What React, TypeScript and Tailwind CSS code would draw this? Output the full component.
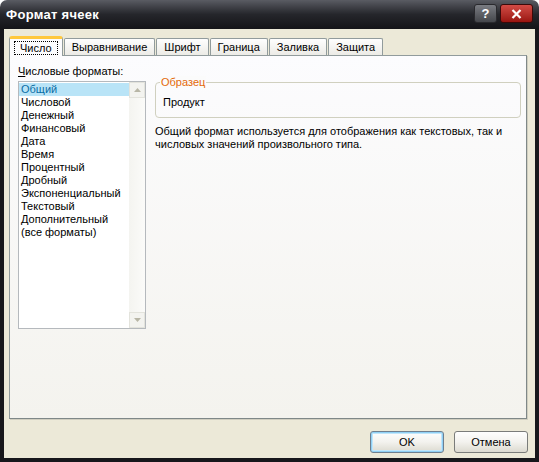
import React from "react";

const tabs = ["Число", "Выравнивание", "Шрифт", "Граница", "Заливка", "Защита"];

const formats = [
  "Общий",
  "Числовой",
  "Денежный",
  "Финансовый",
  "Дата",
  "Время",
  "Процентный",
  "Дробный",
  "Экспоненциальный",
  "Текстовый",
  "Дополнительный",
  "(все форматы)",
];

const font = { fontFamily: '"Liberation Sans", Arial, sans-serif' };

const TitleBar = () => (
  <div className="h-[29px] flex items-center justify-between pl-[6px] pr-[6px] bg-gradient-to-b from-[#5a5c63] via-[#25262b] to-[#141418] rounded-t-[7px]">
    <span className="text-white font-bold text-[13px] tracking-[0.3px]">Формат ячеек</span>
    <div className="flex gap-[3px] mt-[-2px]">
      <div className="w-[23px] h-[19px] rounded-[3px] border border-[#2a2a2e] bg-gradient-to-b from-[#7a7c82] to-[#45474c] flex items-center justify-center text-white font-bold text-[13px]">
        ?
      </div>
      <div className="w-[33px] h-[19px] rounded-[3px] border border-[#3b0a0a] bg-gradient-to-b from-[#d24b45] to-[#9a1410] flex items-center justify-center">
        <svg width="11" height="10" viewBox="0 0 11 10">
          <path d="M1.5 1 L9.5 9 M9.5 1 L1.5 9" stroke="white" strokeWidth="2.2" />
        </svg>
      </div>
    </div>
  </div>
);

const Tabs = () => (
  <div className="flex items-end h-[20px]">
    {tabs.map((t, i) =>
      i === 0 ? (
        <div
          key={t}
          className="relative z-10 h-[20px] px-[4px] flex items-center bg-[#fcfcfe] border border-[#919b9c] border-b-0 rounded-t-[3px] border-t-[3px] border-t-[#ffc83c] mr-[1px] mb-[-1px]"
        >
          <span className="px-[5px] h-[14px] leading-[12px] border border-dotted border-black text-[11px] text-black">
            {t}
          </span>
        </div>
      ) : (
        <div
          key={t}
          className="h-[17px] px-[7px] flex items-center bg-gradient-to-b from-[#fefefe] to-[#ecebe6] border border-[#919b9c] border-b-0 rounded-t-[2px] mr-[1px] text-[11px] text-black"
        >
          {t}
        </div>
      )
    )}
  </div>
);

const ListBox = () => (
  <div className="w-[128px] h-[248px] border border-[#b5b9bd] bg-white flex">
    <div className="flex-1 pt-[1px]">
      {formats.map((f, i) => (
        <div
          key={f}
          className={
            "h-[13px] leading-[13px] pl-[2px] text-[11px] " +
            (i === 0 ? "bg-[#b9e4f7] text-[#0a6ea6]" : "text-black")
          }
        >
          {f}
        </div>
      ))}
    </div>
    <div className="w-[16px] bg-gradient-to-r from-[#f4f4f0] to-[#fbfbf9] flex flex-col justify-between">
      <div className="h-[16px] border border-[#e3e3dc] bg-[#f3f3ef] flex items-center justify-center">
        <svg width="7" height="4" viewBox="0 0 7 4">
          <path d="M0 4 L3.5 0 L7 4 Z" fill="#b8b6a6" />
        </svg>
      </div>
      <div className="h-[16px] border border-[#e3e3dc] bg-[#f3f3ef] flex items-center justify-center">
        <svg width="7" height="4" viewBox="0 0 7 4">
          <path d="M0 0 L3.5 4 L7 0 Z" fill="#b8b6a6" />
        </svg>
      </div>
    </div>
  </div>
);

const Button = ({ label, def }: { label: string; def?: boolean }) => (
  <div
    className={
      "w-[74px] h-[22px] rounded-[3px] border flex items-center justify-center text-[11px] text-black bg-gradient-to-b from-[#fefefe] via-[#f3f2ee] to-[#dcdad0] " +
      (def ? "border-[#6f7f8f] shadow-[inset_0_0_0_1px_#8fd0f5,inset_0_0_0_2px_#c2e6fa]" : "border-[#7a7c7a]")
    }
  >
    {label}
  </div>
);

export default function App() {
  return (
    <div className="w-[539px] h-[462px] flex flex-col bg-white" style={font}>
      <TitleBar />
      <div className="flex-1 flex flex-col bg-[#ece9d8] border-x-[4px] border-b-[4px] border-[#17171b] pl-[5px] pr-[4px] pt-[6px]">
        <Tabs />
        <div className="h-[364px] w-[518px] bg-gradient-to-b from-[#fcfcfe] to-[#f4f3ee] border border-[#919b9c] border-r-[#7f8888] border-b-[#7f8888] shadow-[1px_1px_0_#d0cec0] pl-[8px] pt-[9px] flex">
          <div className="flex flex-col">
            <div className="text-[11px] text-black leading-[13px] mb-[3px]">
              <span className="underline">Ч</span>исловые форматы:
            </div>
            <ListBox />
          </div>
          <div className="ml-[9px] mt-[17px] w-[366px] flex flex-col">
            <div className="relative h-[36px] border border-[#d0d0bf] rounded-[4px] px-[7px] pt-[13px]">
              <span className="absolute left-[4px] top-[-7px] px-[1px] bg-[#fbfbfb] text-[11px] leading-[12px] text-[#e46a0a]">
                Образец
              </span>
              <div className="text-[11px] leading-[13px] text-black">Продукт</div>
            </div>
            <div className="mt-[7px] text-[11px] leading-[13px] text-black">
              Общий формат используется для отображения как текстовых, так и
              <br />
              числовых значений произвольного типа.
            </div>
          </div>
        </div>
        <div className="flex justify-end gap-[10px] mt-[12px] pr-[3px]">
          <Button label="OK" def />
          <Button label="Отмена" />
        </div>
      </div>
    </div>
  );
}
